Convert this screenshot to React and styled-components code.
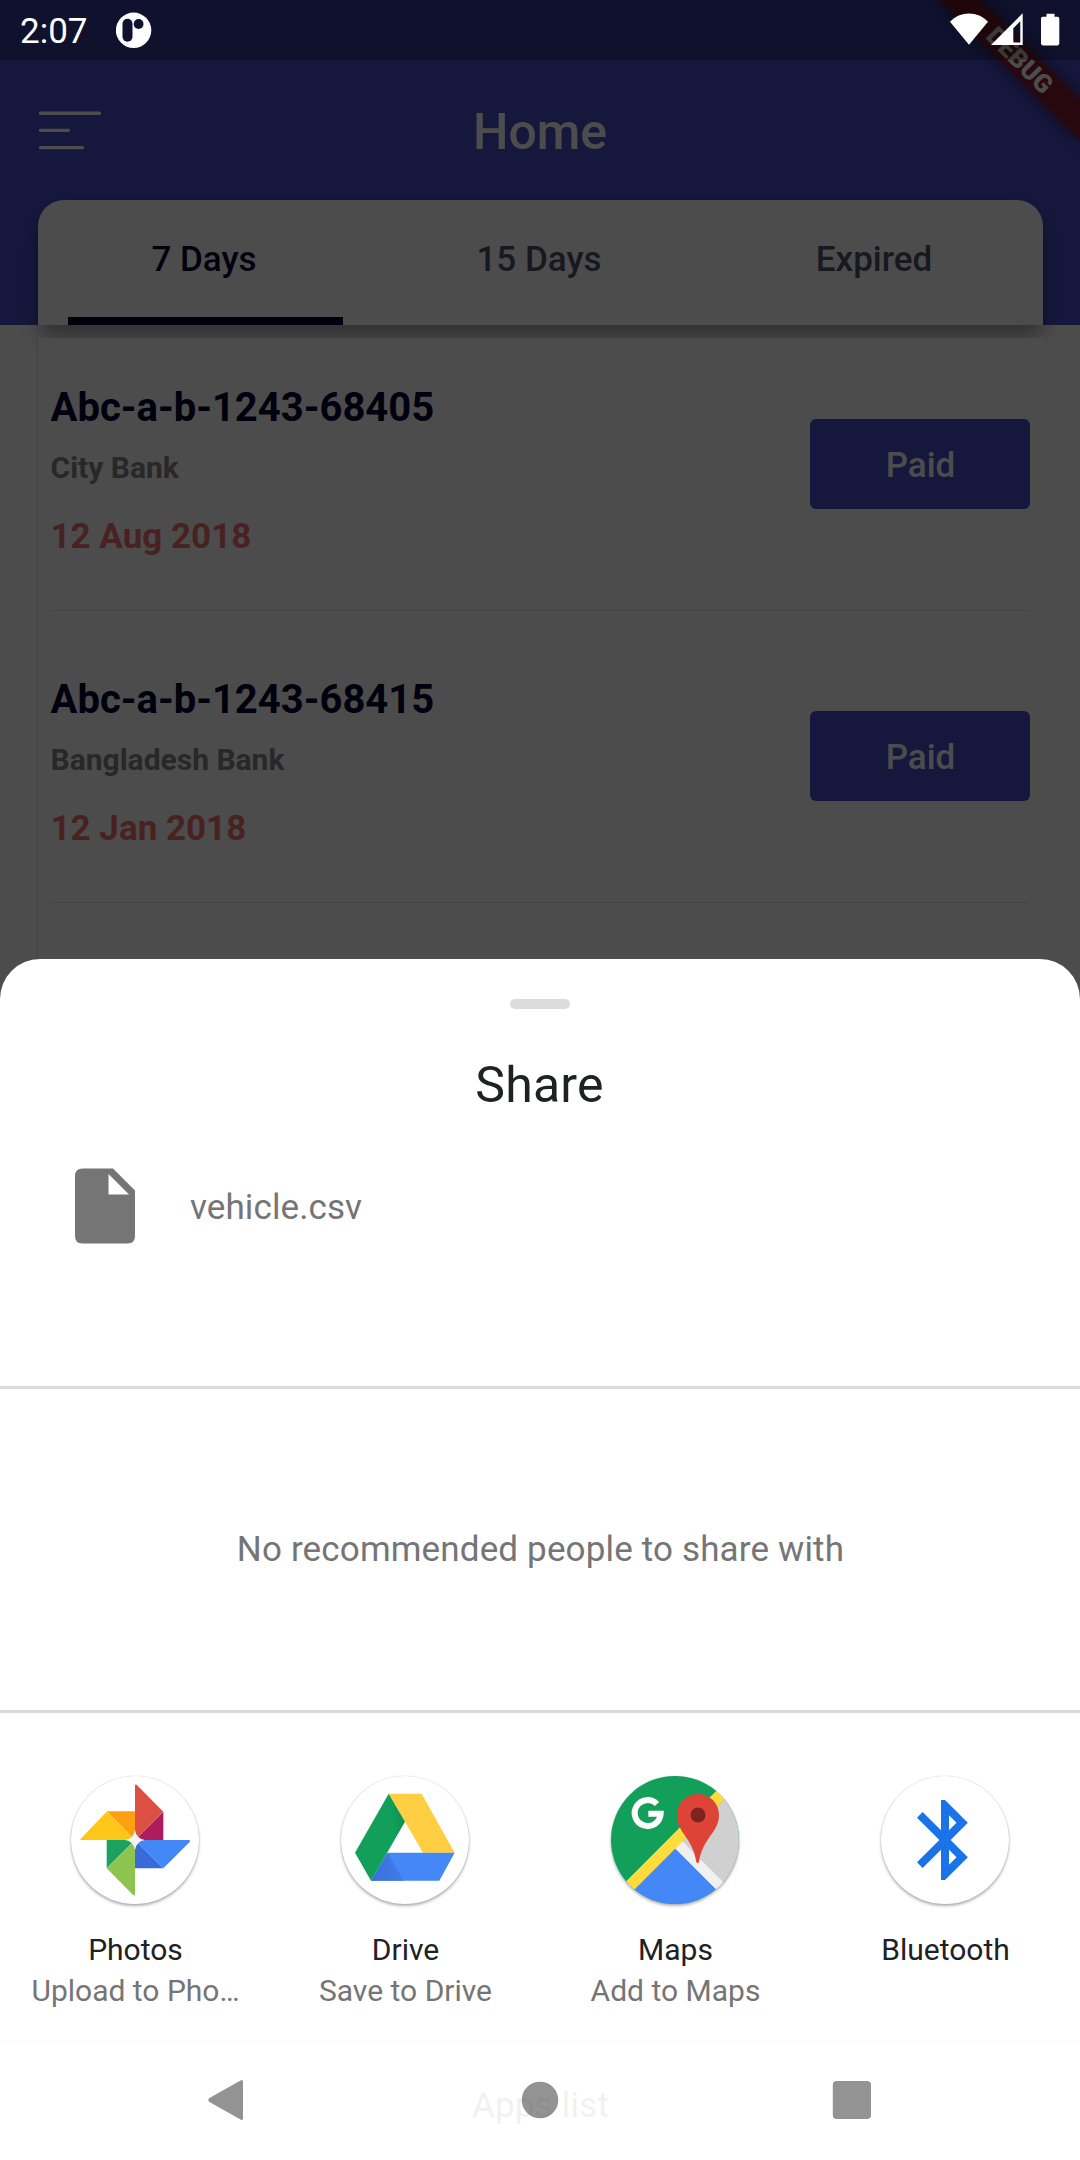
import React from "react";
import styled, { createGlobalStyle } from "styled-components";

const Global = createGlobalStyle`
  * { box-sizing: border-box; }
  body { margin: 0; background: #fff; font-family: Roboto, "Noto Sans", sans-serif; }
  svg { display: block; flex: none; }
`;

const Phone = styled.div`
  position: relative;
  width: 1080px;
  height: 2160px;
  overflow: hidden;
  background: #fff;
`;

const Page = styled.div`
  display: flex;
  flex-direction: column;
`;

const Header = styled.header`
  height: 325px;
  padding: 60px 37.5px 0;
  background: #4b4ecb;
`;

const AppBar = styled.div`
  height: 140px;
  padding: 0 1.5px;
  display: grid;
  grid-template-columns: 1fr auto 1fr;
  align-items: center;
`;

const PageTitle = styled.h1`
  margin: 0;
  padding-top: 3px;
  color: #fff;
  font-size: 50px;
  font-weight: 500;
  line-height: 60px;
`;

const Tabs = styled.nav`
  display: flex;
  height: 125px;
  background: #fff;
  border-radius: 26px 26px 0 0;
  box-shadow: 0 12px 22px -2px rgba(0, 0, 0, 0.4);
`;

const Tab = styled.div`
  flex: 1;
  display: flex;
  align-items: center;
  justify-content: center;
  padding: 0 2px 6px 0;
  color: ${(p) => (p.$active ? "#040430" : "#51516d")};
  font-size: 35px;
  font-weight: 500;
  background: ${(p) =>
    p.$active ? "linear-gradient(#040430, #040430) 30px 100% / 275px 8px no-repeat" : "none"};
`;

const List = styled.main`
  margin: 13px 37px 0;
  height: 640px;
  padding: 46px 13px 0 12.5px;
  background: #fff;
  border-left: 1px solid #dcdcdc;
`;

const Item = styled.article`
  display: flex;
  align-items: center;
  justify-content: space-between;
  height: 227px;
  padding-bottom: 53px;
  margin-bottom: 65px;
  border-bottom: 1px solid #e2e2e2;
`;

const ItemText = styled.div`
  display: flex;
  flex-direction: column;
`;

const Plate = styled.div`
  font-size: 40px;
  line-height: 48px;
  font-weight: 700;
  color: #020230;
`;

const Bank = styled.div`
  margin-top: 18px;
  font-size: 30px;
  line-height: 36px;
  font-weight: 700;
  color: #858585;
`;

const DueDate = styled.div`
  margin-top: 30px;
  font-size: 35px;
  line-height: 42px;
  font-weight: 700;
  color: #f26f70;
`;

const PaidButton = styled.button`
  width: 220px;
  height: 90px;
  margin: 0 0 14px;
  padding: 3px 0 0 1px;
  border: 0;
  border-radius: 6px;
  background: #4b4ecb;
  color: #fff;
  font: 500 35px Roboto, sans-serif;
`;

const DebugBanner = styled.div`
  position: absolute;
  left: 920px;
  top: 45px;
  width: 200px;
  height: 30px;
  transform: rotate(45deg);
  background: rgba(145, 18, 20, 0.84);
  box-shadow: 0 0 20px rgba(0, 0, 0, 0.5);
  color: #fff;
  font-size: 25.5px;
  font-weight: 900;
  line-height: 30px;
  text-align: center;
`;

const Scrim = styled.div`
  position: absolute;
  inset: 0;
  background: rgba(0, 0, 0, 0.7);
`;

const StatusBar = styled.div`
  position: absolute;
  inset: 0 0 auto;
  height: 60px;
  padding: 0 20px;
  display: flex;
  align-items: center;
  background: rgba(0, 0, 0, 0.25);
  color: #fff;
  font-size: 35px;
`;

const Clock = styled.span`
  width: 96px;
  padding-top: 2px;
`;

const Sheet = styled.section`
  position: absolute;
  inset: 959px 0 0;
  padding-top: 40px;
  display: flex;
  flex-direction: column;
  align-items: center;
  background: #fff;
  border-radius: 40px 40px 0 0;
`;

const Handle = styled.div`
  width: 60px;
  height: 10px;
  border-radius: 5px;
  background: #dcdcdc;
`;

const SheetTitle = styled.h2`
  margin: 46px 0 0;
  font-size: 50px;
  font-weight: 400;
  line-height: 60px;
  letter-spacing: 0.2px;
  padding-right: 1px;
  color: #202124;
`;

const FileRow = styled.div`
  width: 100%;
  height: 271px;
  padding: 53px 75px 0;
  display: flex;
  align-items: flex-start;
`;

const FileName = styled.span`
  margin: 19px 0 0 55px;
  font-size: 35px;
  line-height: 42px;
  letter-spacing: 0.1px;
  color: #757575;
`;

const Divider = styled.div`
  width: 100%;
  height: 3px;
  background: #dadbe0;
`;

const People = styled.div`
  height: 321px;
  padding-left: 1px;
  display: flex;
  align-items: center;
  font-size: 35px;
  letter-spacing: 0.15px;
  color: #757575;
`;

const Targets = styled.div`
  width: 100%;
  height: 327px;
  padding-top: 62px;
  display: grid;
  grid-template-columns: repeat(4, 1fr);
`;

const Target = styled.div`
  min-width: 0;
  display: flex;
  flex-direction: column;
  align-items: center;
`;

const IconDisc = styled.div`
  width: 130px;
  height: 130px;
  padding: 1px;
  border-radius: 50%;

  svg {
    border-radius: 50%;
    background: #fff;
    box-shadow: 0 0 1px rgba(0, 0, 0, 0.25), 0 2px 3px rgba(0, 0, 0, 0.3);
  }
`;

const TargetName = styled.div`
  margin-top: 27px;
  padding-left: 1px;
  font-size: 30px;
  line-height: 36px;
  color: #202124;
`;

const TargetHint = styled.div`
  margin-top: 5px;
  padding-left: 1px;
  max-width: 212px;
  overflow: hidden;
  text-overflow: ellipsis;
  white-space: nowrap;
  font-size: 30px;
  line-height: 36px;
  color: #757575;
`;

const AppsList = styled.div`
  margin-top: 41px;
  padding: 1px 0 0 1px;
  font-size: 35px;
  line-height: 42px;
  letter-spacing: 0.2px;
  color: #757575;
`;

const NavBar = styled.div`
  position: absolute;
  inset: auto 0 0;
  height: 120px;
  padding: 0 208px;
  display: flex;
  align-items: center;
  justify-content: space-between;
  background: rgba(255, 255, 255, 0.9);
`;

const MenuIcon = () => (
  <svg width="63" height="40" viewBox="0 0 63 40" stroke="#fff" strokeWidth="3.4" strokeLinecap="round">
    <path d="M1.5 3.2H60.5M1.5 20.4H29.5M1.5 37.6H43.5" />
  </svg>
);

const AppBadge = () => (
  <svg width="36" height="36" viewBox="0 0 36 36">
    <circle cx="17.6" cy="18.3" r="17.7" fill="#fff" />
    <rect x="6.5" y="6.7" width="10" height="23" rx="5" fill="#10112e" />
    <circle cx="22.6" cy="12" r="4.9" fill="#10112e" />
  </svg>
);

const StatusIconsSvg = styled.svg`
  margin-left: auto;
`;

const StatusIcons = () => (
  <StatusIconsSvg width="112" height="34" viewBox="0 0 112 34" fill="#fff">
    <path d="M2 8.8C12-2.4 30-2.4 40 8.8L21 31.8Z" />
    <path d="M74.7 .2V32H43ZM72.3 8.3L65.3 15.3V29.5H72.3Z" fillRule="evenodd" />
    <path d="M98.5 .8h8v3h3q1.8 0 1.8 1.8v25q0 1.8-1.8 1.8H94.8q-1.8 0-1.8-1.8v-25q0-1.8 1.8-1.8h3.7z" />
  </StatusIconsSvg>
);

const FileIcon = () => (
  <svg width="60" height="77" viewBox="0 0 60 77">
    <path d="M7.5 .5H38L60 22.5V68Q60 75.5 52.5 75.5H7.5Q0 75.5 0 68V8Q0 .5 7.5 .5ZM33.5 6V26.5H54Z" fill="#757575" fillRule="evenodd" />
  </svg>
);

const PhotosIcon = () => (
  <svg width="128" height="128" viewBox="3 3 384 384">
    <path d="M110 109H195V195Z" fill="#ffa013" />
    <path d="M32 191L110 110L195 195H33Q28 195 32 191Z" fill="#ffc61a" />
    <path d="M280 110V195H195Z" fill="#af1b5b" />
    <path d="M195 29H200L280 110L195 195Z" fill="#dd4f43" />
    <path d="M195 195V280H280Z" fill="#386ad8" />
    <path d="M195 195H358Q363 196 359 201L280 280Z" fill="#4487f6" />
    <path d="M110 195H195L110 280Z" fill="#1ba261" />
    <path d="M110 280L195 195V361Q191 362 187 358Z" fill="#8dc44f" />
    <path d="M195 165Q199 191 225 195Q199 199 195 225Q191 199 165 195Q191 191 195 165Z" fill="#f3f3f3" />
  </svg>
);

const DriveIcon = () => (
  <svg width="128" height="128" viewBox="3 3 384 384">
    <defs>
      <linearGradient id="driveFold" x1="0" x2="1" y1="0" y2="0">
        <stop offset="0" stopColor="#3a6fdc" />
        <stop offset="1" stopColor="#407de9" />
      </linearGradient>
      <linearGradient id="driveLeaf" x1=".7" x2="1" y1=".2" y2=".1">
        <stop offset="0" stopColor="#119f5a" />
        <stop offset="1" stopColor="#0e8b4e" />
      </linearGradient>
    </defs>
    <path d="M146 56H245L344 233H249Z" fill="#ffce42" />
    <path d="M142 233H344L298 317H93Z" fill="#4487f6" />
    <path d="M142 233L191 317H93Z" fill="url(#driveFold)" />
    <path d="M146 56L195 140L93 317L45 233Z" fill="url(#driveLeaf)" />
  </svg>
);

const MapsIcon = () => (
  <svg width="128" height="128" viewBox="3 3 384 384">
    <rect width="390" height="390" fill="#129f5a" />
    <path d="M390 26L195 220L390 415Z" fill="#d0d0d0" />
    <path d="M195 220L0 415H390Z" fill="#4487f6" />
    <path d="M216 198L390 372V415L195 220Z" fill="#f0f0f0" />
    <path d="M340 27L364 51L52 364L28 340Z" fill="#ffdc3c" />
    <path d="M320 47L343 73L74 343L50 319Z" fill="#ffdc3c" />
    <path d="M264 57C229 57 201 85 201 120C201 175 248 187 259 261Q263 268 267 261C278 187 327 173 327 120C327 85 299 57 264 57Z" fill="#dd4437" />
    <circle cx="264" cy="120" r="22.5" fill="#7c241d" />
    <path d="M141 87A39 39 0 1 0 152 116H115" fill="none" stroke="#fff" strokeWidth="18" />
  </svg>
);

const BluetoothIcon = () => (
  <svg width="128" height="128" viewBox="3 3 384 384">
    <path
      transform="translate(51 51) scale(12)"
      fill="#1a73e8"
      d="M17.71 7.71L12 2h-1v7.59L6.41 5 5 6.41 10.59 12 5 17.59 6.41 19 11 14.41V22h1l5.71-5.71-4.3-4.29 4.3-4.29zM13 5.83l1.88 1.88L13 9.59V5.83zm1.88 10.46L13 18.17v-3.76l1.88 1.88z"
    />
  </svg>
);

const BackIcon = () => (
  <svg width="40" height="42" viewBox="0 0 40 42">
    <path d="M32.5 1.5Q35 0 35 3V39Q35 42 32.5 40.5L1.5 23Q-1 21 1.5 19Z" fill="#939393" />
  </svg>
);

const HomeIcon = () => (
  <svg width="38" height="38" viewBox="0 0 38 38">
    <circle cx="19" cy="19" r="18.3" fill="#595959" fillOpacity=".65" />
  </svg>
);

const RecentIcon = () => (
  <svg width="40" height="40" viewBox="0 0 40 40">
    <rect x=".8" y="1" width="38.2" height="38" rx="4" fill="#939393" />
  </svg>
);

const bills = [
  { plate: "Abc-a-b-1243-68405", bank: "City Bank", due: "12 Aug 2018" },
  { plate: "Abc-a-b-1243-68415", bank: "Bangladesh Bank", due: "12 Jan 2018" },
];

const targets = [
  { name: "Photos", hint: "Upload to Pho…", Icon: PhotosIcon },
  { name: "Drive", hint: "Save to Drive", Icon: DriveIcon },
  { name: "Maps", hint: "Add to Maps", Icon: MapsIcon },
  { name: "Bluetooth", Icon: BluetoothIcon },
];

export default function App() {
  return (
    <Phone>
      <Global />
      <Page>
        <Header>
          <AppBar>
            <MenuIcon />
            <PageTitle>Home</PageTitle>
          </AppBar>
          <Tabs>
            <Tab $active>7 Days</Tab>
            <Tab>15 Days</Tab>
            <Tab>Expired</Tab>
          </Tabs>
        </Header>
        <List>
          {bills.map((b) => (
            <Item key={b.plate}>
              <ItemText>
                <Plate>{b.plate}</Plate>
                <Bank>{b.bank}</Bank>
                <DueDate>{b.due}</DueDate>
              </ItemText>
              <PaidButton>Paid</PaidButton>
            </Item>
          ))}
        </List>
      </Page>
      <DebugBanner>DEBUG</DebugBanner>
      <Scrim />
      <StatusBar>
        <Clock>2:07</Clock>
        <AppBadge />
        <StatusIcons />
      </StatusBar>
      <Sheet>
        <Handle />
        <SheetTitle>Share</SheetTitle>
        <FileRow>
          <FileIcon />
          <FileName>vehicle.csv</FileName>
        </FileRow>
        <Divider />
        <People>No recommended people to share with</People>
        <Divider />
        <Targets>
          {targets.map(({ name, hint, Icon }) => (
            <Target key={name}>
              <IconDisc>
                <Icon />
              </IconDisc>
              <TargetName>{name}</TargetName>
              {hint && <TargetHint>{hint}</TargetHint>}
            </Target>
          ))}
        </Targets>
        <Divider />
        <AppsList>Apps list</AppsList>
      </Sheet>
      <NavBar>
        <BackIcon />
        <HomeIcon />
        <RecentIcon />
      </NavBar>
    </Phone>
  );
}
